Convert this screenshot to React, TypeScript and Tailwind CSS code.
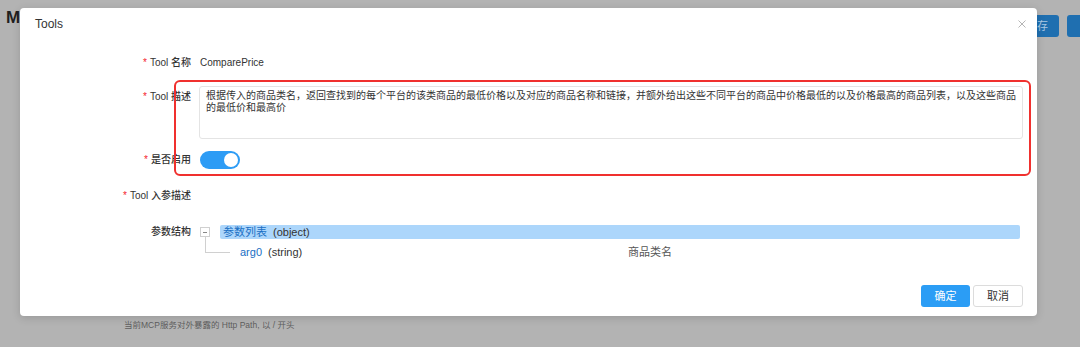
import React from 'react';

const FONT = { fontFamily: '"Liberation Sans", "Noto Sans CJK SC", sans-serif' };

function Label({ text, required = true, className = '' }: { text: string; required?: boolean; className?: string }) {
  return (
    <div className={`w-[171px] shrink-0 text-right text-[10px] leading-[12px] font-medium text-[#333] ${className}`}>
      {required && <span className="text-[#f5222d] mr-[3px]">*</span>}
      {text}
    </div>
  );
}

export default function App() {
  return (
    <div className="relative w-[1080px] h-[347px] overflow-hidden bg-[#b3b3b3]" style={FONT}>
      {/* page behind the dialog */}
      <div className="flex justify-between items-start w-[1140px] pt-[8px] pl-[6px]">
        <div className="text-[17px] font-bold leading-[20px] text-[#1f1f1f]">M</div>
        <div className="flex gap-[8px] mt-[7px]">
          <div className="w-[44px] h-[22px] rounded-[3px] bg-[#1f6fb0] text-[#a9c8e4] text-[11px] leading-[22px] text-center">保存</div>
          <div className="w-[73px] h-[22px] rounded-[3px] bg-[#1f6fb0]" />
        </div>
      </div>
      <div className="ml-[124px] mt-[282px] text-[8.5px] leading-[12px] text-[#5e5e5e]">
        当前MCP服务对外暴露的 Http Path, 以 / 开头
      </div>

      {/* dialog */}
      <div className="absolute left-[20px] top-[8px] w-[1017px] bg-white rounded-[4px] shadow-[0_2px_8px_rgba(0,0,0,0.15)] flex flex-col">
        <div className="h-[32px] flex items-center justify-between pl-[15px] pr-[11px]">
          <span className="text-[12px] text-[#333]">Tools</span>
          <svg width="8" height="8" viewBox="0 0 8 8">
            <path d="M0.5 0.5L7.5 7.5M7.5 0.5L0.5 7.5" stroke="#b5b5b5" strokeWidth="1" />
          </svg>
        </div>

        <div className="flex items-center h-[20px] mt-[13px]">
          <Label text="Tool 名称" />
          <div className="ml-[9px] text-[10px] leading-[12px] text-[#333]">ComparePrice</div>
        </div>

        <div className="flex items-start mt-[13px]">
          <Label text="Tool 描述" className="pt-[5px]" />
          <div className="ml-[8px] mr-[14px] flex-1 h-[53px] border border-[#e4e4e4] rounded-[3px] pl-[6px] pr-[2px] pt-[3px] text-[10px] leading-[11.5px] text-[#333]">
            根据传入的商品类名，返回查找到的每个平台的该类商品的最低价格以及对应的商品名称和链接，并额外给出这些不同平台的商品中价格最低的以及价格最高的商品列表，以及这些商品的最低价和最高价
          </div>
        </div>

        <div className="flex items-center h-[18px] mt-[12px]">
          <Label text="是否启用" />
          <div className="ml-[9px] w-[40px] h-[18px] rounded-full bg-[#2d9cf5] flex items-center justify-end pr-[2px]">
            <div className="w-[14px] h-[14px] rounded-full bg-white" />
          </div>
        </div>

        <div className="flex items-center h-[20px] mt-[17px]">
          <Label text="Tool 入参描述" />
        </div>

        <div className="flex items-start mt-[19px]">
          <Label text="参数结构" required={false} className="pt-[1px]" />
          <div className="ml-[9px] flex-1 mr-[17px] flex flex-col">
            <div className="flex items-center h-[14px]">
              <div className="w-[10px] h-[10px] border border-[#d0d0d0] flex items-center justify-center">
                <div className="w-[4px] h-px bg-[#888]" />
              </div>
              <div className="ml-[10px] flex-1 h-[14px] bg-[#acd6fb] rounded-[2px] flex items-center pl-[3px] text-[11px] leading-[14px]">
                <span className="text-[#1a6fc4]">参数列表</span>
                <span className="ml-[6px] text-[#333]">(object)</span>
              </div>
            </div>
            <div className="flex items-start h-[14px] mt-[6px]">
              <div className="ml-[5px] w-[25px] h-[16px] -mt-[8px] border-l border-b border-[#d0d0d0]" />
              <div className="ml-[10px] w-[388px] flex items-center text-[11px] leading-[14px]">
                <span className="text-[#1a6fc4]">arg0</span>
                <span className="ml-[6px] text-[#333]">(string)</span>
              </div>
              <div className="text-[11px] leading-[14px] text-[#555]">商品类名</div>
            </div>
          </div>
        </div>

        <div className="flex justify-end gap-[3px] mt-[26px] mb-[9px] pr-[14px]">
          <button className="w-[49px] h-[22px] rounded-[3px] bg-[#2b9df5] text-white text-[11px]">确定</button>
          <button className="w-[50px] h-[22px] rounded-[3px] bg-white border border-[#dcdcdc] text-[#333] text-[11px]">取消</button>
        </div>
      </div>

      {/* red annotation */}
      <div className="absolute left-[174px] top-[80px] w-[857px] h-[96px] border-2 border-[#f0302e] rounded-[6px]" />
    </div>
  );
}
